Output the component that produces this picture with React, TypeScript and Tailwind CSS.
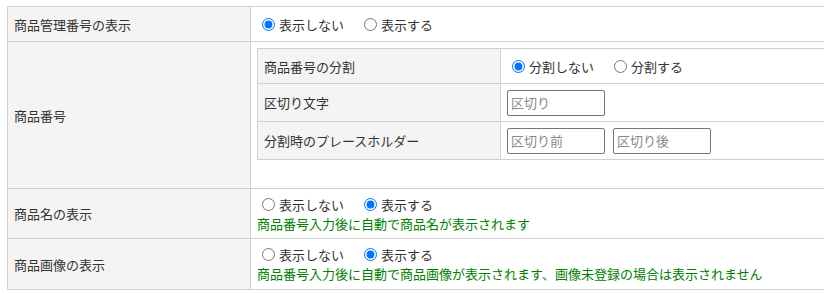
import React from 'react';

const font = { fontFamily: '"Noto Sans CJK JP", "Noto Sans", sans-serif' };

function Radio({ name, label, checked, first }: { name: string; label: string; checked?: boolean; first?: boolean }) {
  return (
    <label className={`flex items-center ${first ? '' : 'ml-[15px]'}`}>
      <input type="radio" name={name} defaultChecked={checked} className="m-0 ml-[5px] mr-[4px] h-[13px] w-[13px]" />
      <span>{label}</span>
    </label>
  );
}

function RadioPair({ name, a, b, checked }: { name: string; a: string; b: string; checked: 0 | 1 }) {
  return (
    <div className="flex items-center h-[19px]">
      <Radio name={name} label={a} checked={checked === 0} first />
      <Radio name={name} label={b} checked={checked === 1} />
    </div>
  );
}

function TextBox({ placeholder }: { placeholder: string }) {
  return (
    <input
      type="text"
      placeholder={placeholder}
      className="h-[26px] w-[98px] rounded-[2px] border border-[#767676] bg-white px-[3px] text-[13px] placeholder:text-[#8a8a8a] outline-none"
      style={font}
    />
  );
}

export default function App() {
  const label = 'border border-[#d0d0d0] bg-[#f3f4f3] px-[6px] align-middle';
  const value = 'border border-[#d0d0d0] bg-white px-[6px] align-middle';

  return (
    <div className="w-[824px] h-[294px] overflow-hidden bg-white pt-[6px] pl-[7px] text-[13px] leading-[19px] text-[#333]" style={font}>
      <table className="w-[830px] border-collapse">
        <tbody>
          <tr className="h-[35px]">
            <td className={`${label} w-[243px]`}>商品管理番号の表示</td>
            <td className={value}>
              <RadioPair name="kanri" a="表示しない" b="表示する" checked={0} />
            </td>
          </tr>
          <tr>
            <td className={label}>商品番号</td>
            <td className={`${value} pt-[6px] pb-[28px]`}>
              <table className="w-full border-collapse">
                <tbody>
                  <tr className="h-[35px]">
                    <td className={`${label} w-[243px]`}>商品番号の分割</td>
                    <td className={value}>
                      <RadioPair name="bunkatsu" a="分割しない" b="分割する" checked={0} />
                    </td>
                  </tr>
                  <tr className="h-[38px]">
                    <td className={label}>区切り文字</td>
                    <td className={value}>
                      <div className="flex">
                        <TextBox placeholder="区切り" />
                      </div>
                    </td>
                  </tr>
                  <tr className="h-[38px]">
                    <td className={label}>分割時のプレースホルダー</td>
                    <td className={value}>
                      <div className="flex gap-2">
                        <TextBox placeholder="区切り前" />
                        <TextBox placeholder="区切り後" />
                      </div>
                    </td>
                  </tr>
                </tbody>
              </table>
            </td>
          </tr>
          <tr className="h-[50px]">
            <td className={label}>商品名の表示</td>
            <td className={value}>
              <RadioPair name="name" a="表示しない" b="表示する" checked={1} />
              <p className="text-[#008000]">商品番号入力後に自動で商品名が表示されます</p>
            </td>
          </tr>
          <tr className="h-[51px]">
            <td className={label}>商品画像の表示</td>
            <td className={value}>
              <RadioPair name="image" a="表示しない" b="表示する" checked={1} />
              <p className="text-[#008000]">商品番号入力後に自動で商品画像が表示されます、画像未登録の場合は表示されません</p>
            </td>
          </tr>
        </tbody>
      </table>
    </div>
  );
}
